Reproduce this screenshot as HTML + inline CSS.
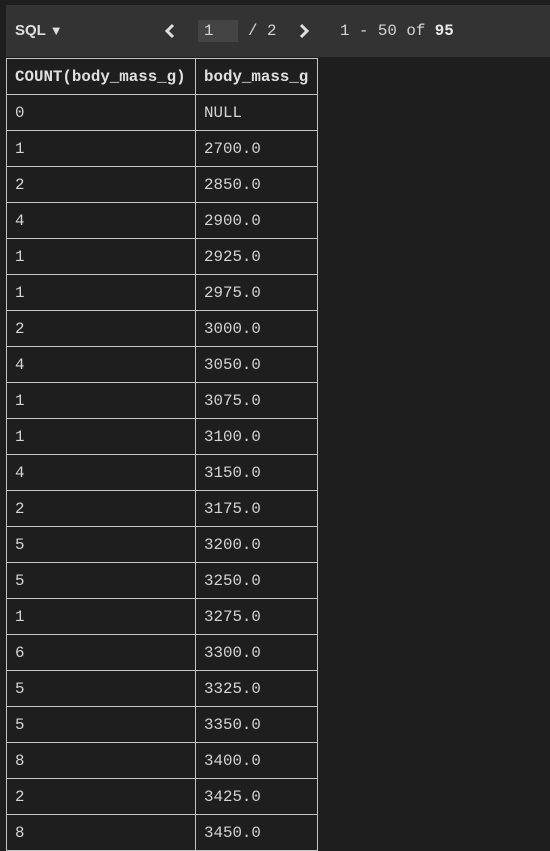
<!DOCTYPE html>
<html><head><style>
body{margin:0;width:550px;height:846px;background:#1e1e1e;overflow:hidden;font-family:"Liberation Mono",monospace;color:#d4d4d4;position:relative}
.bar{position:absolute;left:6px;top:5px;width:544px;height:52px;background:#333333}
.t{position:absolute;font-size:15.8px;white-space:nowrap;line-height:20px}
.b{font-weight:bold}
table{position:absolute;left:6px;top:58px;border-collapse:collapse;font-size:15.8px}
td{border:1px solid #c4c4c4;height:36px;padding:0 0 0 8px;box-sizing:border-box;color:#d4d4d4}
td.a{width:189px}td.c{width:122px}
tr.h td{font-weight:bold;color:#e0e0e0}
</style></head><body>
<div class="bar"></div>
<div class="t b" style="left:15px;top:21px;font-family:'Liberation Sans',sans-serif;font-size:15px;color:#e0e0e0">SQL <span style="font-size:13px">▼</span></div>
<svg style="position:absolute;left:163px;top:23px" width="14" height="16"><path d="M10 2 L4 8 L10 14" stroke="#e0e0e0" stroke-width="3" fill="none"/></svg>
<div style="position:absolute;left:198px;top:20px;width:40px;height:22px;background:#444"></div>
<div class="t" style="left:204px;top:21px">1</div>
<div class="t" style="left:248px;top:21px">/ 2</div>
<svg style="position:absolute;left:297px;top:23px" width="14" height="16"><path d="M4 2 L10 8 L4 14" stroke="#e0e0e0" stroke-width="3" fill="none"/></svg>
<div class="t" style="left:340px;top:21px">1 - 50 of <b style="color:#e8e8e8">95</b></div>
<table>
<tr class="h"><td class="a">COUNT(body_mass_g)</td><td class="c">body_mass_g</td></tr>
<tr><td class="a">0</td><td class="c">NULL</td></tr>
<tr><td class="a">1</td><td class="c">2700.0</td></tr>
<tr><td class="a">2</td><td class="c">2850.0</td></tr>
<tr><td class="a">4</td><td class="c">2900.0</td></tr>
<tr><td class="a">1</td><td class="c">2925.0</td></tr>
<tr><td class="a">1</td><td class="c">2975.0</td></tr>
<tr><td class="a">2</td><td class="c">3000.0</td></tr>
<tr><td class="a">4</td><td class="c">3050.0</td></tr>
<tr><td class="a">1</td><td class="c">3075.0</td></tr>
<tr><td class="a">1</td><td class="c">3100.0</td></tr>
<tr><td class="a">4</td><td class="c">3150.0</td></tr>
<tr><td class="a">2</td><td class="c">3175.0</td></tr>
<tr><td class="a">5</td><td class="c">3200.0</td></tr>
<tr><td class="a">5</td><td class="c">3250.0</td></tr>
<tr><td class="a">1</td><td class="c">3275.0</td></tr>
<tr><td class="a">6</td><td class="c">3300.0</td></tr>
<tr><td class="a">5</td><td class="c">3325.0</td></tr>
<tr><td class="a">5</td><td class="c">3350.0</td></tr>
<tr><td class="a">8</td><td class="c">3400.0</td></tr>
<tr><td class="a">2</td><td class="c">3425.0</td></tr>
<tr><td class="a">8</td><td class="c">3450.0</td></tr>
</table>
</body></html>
